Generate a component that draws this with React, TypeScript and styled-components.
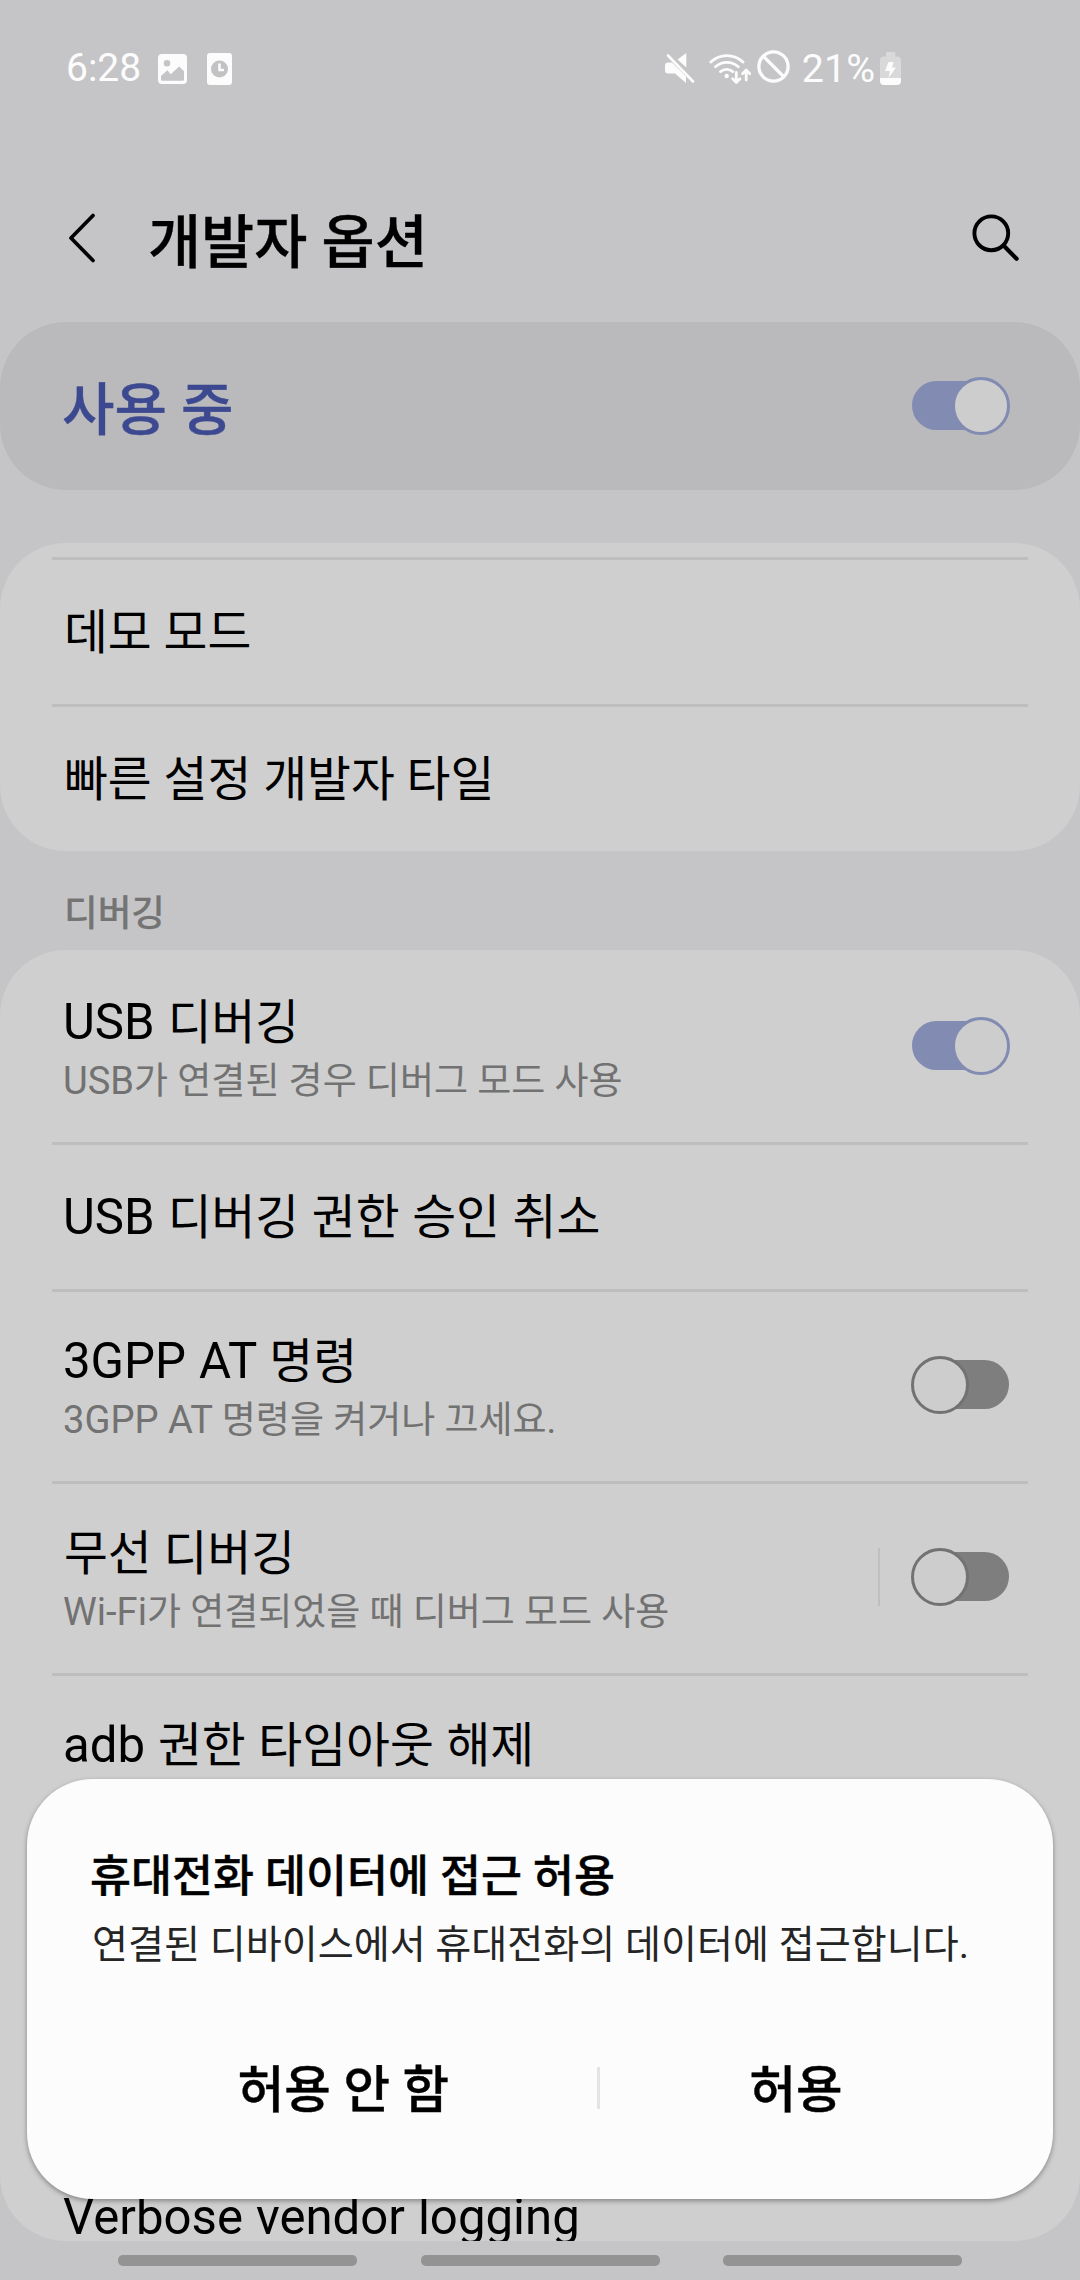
import React from "react";
import styled, { createGlobalStyle } from "styled-components";

const GlobalStyle = createGlobalStyle`
  *, *::before, *::after { box-sizing: border-box; }
  body {
    margin: 0;
    background: #c5c5c7;
    font-family: Roboto, "Noto Sans CJK KR", sans-serif;
  }
`;

const Screen = styled.div`
  position: relative;
  width: 1080px;
  height: 2280px;
  display: flex;
  flex-direction: column;
  background: #c5c5c7;
  color: #000;
  overflow: hidden;
  white-space: nowrap;
`;

const StatusBar = styled.header`
  flex: none;
  height: 136px;
  display: flex;
  justify-content: space-between;
  padding: 45px 179px 0 66px;
  color: #fcfcfc;
`;

const StatusGroup = styled.div`
  display: flex;
  align-items: center;
  height: 47px;
`;

const StatusText = styled.span<{ $size: number }>`
  font-size: ${(p) => p.$size}px;
  line-height: 47px;
`;

const Glyph = styled.svg<{ $ml?: number; $lift?: number }>`
  flex: none;
  display: block;
  margin-left: ${(p) => p.$ml ?? 0}px;
  margin-bottom: ${(p) => p.$lift ?? 0}px;
`;

const AppBar = styled.div`
  flex: none;
  height: 186px;
  display: flex;
  align-items: flex-start;
  padding: 72px 61px 0 66px;
`;

const IconButton = styled.button`
  border: 0;
  padding: 0;
  background: none;
  display: flex;
  margin-top: 5px;
`;

const PageTitle = styled.h1`
  flex: 1;
  margin: 0 0 0 48px;
  font-size: 57.7px;
  line-height: 70px;
  font-weight: 500;
  -webkit-text-stroke: 0.4px currentColor;
`;

const MasterSwitch = styled.section`
  flex: none;
  height: 168px;
  display: flex;
  align-items: center;
  justify-content: space-between;
  padding: 0 70px 0 62px;
  border-radius: 66px;
  background: #bababc;
`;

const MasterLabel = styled.span`
  padding-top: 9px;
  font-size: 57px;
  line-height: 80px;
  font-weight: 500;
  -webkit-text-stroke: 0.4px currentColor;
  color: #3c4990;
`;

const Card = styled.section<{ $top: number; $pad: number; $height: number }>`
  flex: none;
  height: ${(p) => p.$height}px;
  margin-top: ${(p) => p.$top}px;
  padding-top: ${(p) => p.$pad}px;
  border-radius: 66px;
  background: #cfcfcf;
  overflow: hidden;
`;

const Rule = styled.hr`
  height: 3px;
  margin: 0 52px;
  border: 0;
  background: #bebebe;
`;

const Row = styled.div<{ $tall?: boolean }>`
  display: flex;
  align-items: flex-start;
  justify-content: space-between;
  height: ${(p) => (p.$tall ? 189 : 144)}px;
  padding: ${(p) => (p.$tall ? 38 : 41)}px 70px 0 63px;
`;

const RowTitle = styled.div<{ $inset: boolean }>`
  padding-left: ${(p) => (p.$inset ? 1 : 0)}px;
  font-size: 47.7px;
  line-height: 65px;
  word-spacing: ${(p) => (p.$inset ? 0 : 0.8)}px;
`;

const RowSummary = styled.div`
  font-size: 37px;
  line-height: 52px;
  color: #727272;
`;

const Latin = styled.span`
  font-size: 1.03em;
  line-height: 0;
`;

const RowControl = styled.div`
  display: flex;
  align-items: center;
  gap: 31px;
  margin-top: 26px;
`;

const ControlDivider = styled.span`
  width: 2px;
  height: 58px;
  background: #bfbfbf;
`;

const HiddenRows = styled.div`
  height: 277px;
`;

const SectionLabel = styled.h2`
  flex: none;
  height: 99px;
  margin: 0;
  padding: 38px 0 0 64px;
  font-size: 36.6px;
  line-height: 50px;
  font-weight: 500;
  -webkit-text-stroke: 0.2px currentColor;
  color: #747474;
`;

const Track = styled.span<{ $on: boolean }>`
  flex: none;
  display: flex;
  align-items: center;
  justify-content: ${(p) => (p.$on ? "flex-end" : "flex-start")};
  position: relative;
  width: 98px;
  height: 58px;
  margin-right: ${(p) => (p.$on ? 0 : 1)}px;

  &::before {
    content: "";
    position: absolute;
    top: 4px;
    left: ${(p) => (p.$on ? 0 : 8)}px;
    right: ${(p) => (p.$on ? 8 : 0)}px;
    height: 49px;
    border-radius: 25px;
    background: ${(p) => (p.$on ? "#828bb2" : "#7e7e7e")};
  }
`;

const Knob = styled.span<{ $on: boolean }>`
  position: relative;
  width: 58px;
  height: 58px;
  border: 3px solid ${(p) => (p.$on ? "#828bb2" : "#727272")};
  border-radius: 50%;
  background: #cdcdcd;
`;

const NavBar = styled.nav`
  flex: 1;
  display: flex;
  justify-content: space-between;
  padding: 14px 118px 0;
`;

const NavHandle = styled.span`
  width: 239px;
  height: 11px;
  border-radius: 5px;
  background: #939393;
`;

const Dialog = styled.div`
  position: absolute;
  left: 27px;
  right: 27px;
  top: 1779px;
  height: 420px;
  padding: 68px 61px 0 63px;
  border-radius: 66px;
  background: #fcfcfc;
  box-shadow: 0 2px 5px rgba(0, 0, 0, 0.36);
`;

const DialogTitle = styled.h3`
  margin: 0;
  font-size: 44.55px;
  line-height: 60px;
  font-weight: 500;
  -webkit-text-stroke: 0.4px currentColor;
`;

const DialogBody = styled.p`
  margin: 11px 0 0 2px;
  font-size: 39.14px;
  line-height: 54px;
  color: #252525;
`;

const DialogActions = styled.div`
  display: grid;
  grid-template-columns: 507px 3px 392px;
  align-items: center;
  margin-top: 83px;
`;

const DialogButton = styled.button`
  border: 0;
  padding: 6px 0 0;
  background: none;
  font: 500 50.6px/60px Roboto, "Noto Sans CJK KR", sans-serif;
  -webkit-text-stroke: 0.4px currentColor;
  color: #000;
`;

const ActionDivider = styled.span`
  height: 42px;
  background: #e4e4e4;
`;

/* Latin runs are set slightly larger so their caps balance the Hangul. */
function Mixed({ children }: { children: string }) {
  return (
    <>
      {children
        .split(/([A-Za-z0-9][A-Za-z0-9 -]*)/)
        .map((part, i) => (i % 2 ? <Latin key={i}>{part}</Latin> : part))}
    </>
  );
}

function Toggle({ on }: { on: boolean }) {
  return (
    <Track $on={on} role="switch" aria-checked={on}>
      <Knob $on={on} />
    </Track>
  );
}

type OptionProps = { title: string; summary?: string; on?: boolean; divided?: boolean; tall?: boolean };

function Option({ title, summary, on, divided, tall }: OptionProps) {
  return (
    <Row $tall={tall || !!summary}>
      <div>
        <RowTitle $inset={!/^[A-Za-z0-9]/.test(title)}>
          <Mixed>{title}</Mixed>
        </RowTitle>
        {summary && (
          <RowSummary>
            <Mixed>{summary}</Mixed>
          </RowSummary>
        )}
      </div>
      {on !== undefined && (
        <RowControl>
          {divided && <ControlDivider />}
          <Toggle on={on} />
        </RowControl>
      )}
    </Row>
  );
}

export default function App() {
  return (
    <>
      <GlobalStyle />
      <Screen>
        <StatusBar>
          <StatusGroup>
            <StatusText $size={39}>6:28</StatusText>
            <Glyph $ml={17} width="29" height="30" viewBox="0 0 29 30">
              <path
                fillRule="evenodd"
                fill="#fcfcfc"
                d="M4 0h21a4 4 0 0 1 4 4v22a4 4 0 0 1-4 4H4a4 4 0 0 1-4-4V4a4 4 0 0 1 4-4zM9 6a3.300 3.300 0 1 0 0 6.600a3.300 3.300 0 0 0 0-6.600zM3 22v3.500a1.200 1.200 0 0 0 1.200 1.200h20.600a1.200 1.200 0 0 0 1.200-1.200V17.200L21.200 12.500 12.700 20.200 9.400 16.200z"
              />
            </Glyph>
            <Glyph $ml={20} width="25" height="32" viewBox="0 0 25 32">
              <rect width="25" height="32" rx="3" fill="#fcfcfc" />
              <circle cx="12.500" cy="16" r="8.500" fill="#c2c2c4" />
              <path d="M12.500 10.500v6.500h4.500" fill="none" stroke="#fcfcfc" strokeWidth="2.600" />
            </Glyph>
          </StatusGroup>
          <StatusGroup>
            <Glyph width="30" height="31" viewBox="0 0 30 31">
              <path d="M0 12.500a3 3 0 0 1 3-3h4L21 23.500V30L10 20.500H3a3 3 0 0 1-3-3zM21.300 0v14.500L12.500 6.500z" fill="#fcfcfc" />
              <path d="M3 2.500 28 28.500" stroke="#fcfcfc" strokeWidth="2.600" strokeLinecap="round" />
            </Glyph>
            <Glyph $ml={14} width="42" height="35" viewBox="0 0 42 35">
              <g fill="none" stroke="#fcfcfc" strokeWidth="2.800" strokeLinecap="round" strokeLinejoin="round">
                <path d="M1.800 11A23.500 23.500 0 0 1 34 11M6.500 15.800A17 17 0 0 1 29.300 15.800M11.500 20.600A9.500 9.500 0 0 1 23.800 20.600" />
                <path d="M27.300 21.500v9.500M23.700 27.800l3.600 3.600 3.600-3.600M37.200 29V19.500M33.600 22.700l3.600-3.600 3.600 3.600" />
              </g>
              <circle cx="17.700" cy="25" r="2.200" fill="#fcfcfc" />
            </Glyph>
            <Glyph $ml={6} $lift={4} width="33" height="33" viewBox="0 0 33 33">
              <circle cx="16.500" cy="16.500" r="14.600" fill="none" stroke="#fcfcfc" strokeWidth="3.300" />
              <path d="M6 6 27 27" stroke="#fcfcfc" strokeWidth="3.300" />
            </Glyph>
            <Glyph width="12" height="10" />
            <StatusText $size={39.4}>21%</StatusText>
            <Glyph $ml={5} width="21" height="33" viewBox="0 0 21 33">
              <path d="M6 1a1 1 0 0 1 1-1h7.300a1 1 0 0 1 1 1v3.500H17a4 4 0 0 1 4 4V26H0V8.500a4 4 0 0 1 4-4h2z" fill="#d9d9da" />
              <path d="M0 26h21v3a4 4 0 0 1-4 4H4a4 4 0 0 1-4-4zM8.500 10h5l-1.500 5.500h4L8.500 26l1.500-7H5z" fill="#fcfcfc" />
            </Glyph>
          </StatusGroup>
        </StatusBar>

        <AppBar>
          <IconButton aria-label="back">
            <Glyph width="34" height="50" viewBox="0 0 34 50">
              <path d="M27 2.500 5 25 27 47.500" fill="none" stroke="#000" strokeWidth="3.700" strokeLinecap="round" strokeLinejoin="round" />
            </Glyph>
          </IconButton>
          <PageTitle>개발자 옵션</PageTitle>
          <IconButton aria-label="search">
            <Glyph width="50" height="50" viewBox="0 0 50 50">
              <circle cx="22.300" cy="20.300" r="16.900" fill="none" stroke="#000" strokeWidth="3.900" />
              <path d="M34.800 32.700 47.600 45.800" stroke="#000" strokeWidth="4.200" strokeLinecap="round" />
            </Glyph>
          </IconButton>
        </AppBar>

        <MasterSwitch>
          <MasterLabel>사용 중</MasterLabel>
          <Toggle on />
        </MasterSwitch>

        <Card $top={53} $pad={14} $height={308}>
          <Rule />
          <Option title="데모 모드" />
          <Rule />
          <Option title="빠른 설정 개발자 타일" />
        </Card>

        <SectionLabel>디버깅</SectionLabel>

        <Card $top={0} $pad={3} $height={1291}>
          <Option title="USB 디버깅" summary="USB가 연결된 경우 디버그 모드 사용" on />
          <Rule />
          <Option title="USB 디버깅 권한 승인 취소" />
          <Rule />
          <Option title="3GPP AT 명령" summary="3GPP AT 명령을 켜거나 끄세요." on={false} />
          <Rule />
          <Option title="무선 디버깅" summary="Wi-Fi가 연결되었을 때 디버그 모드 사용" on={false} divided />
          <Rule />
          <Option title="adb 권한 타임아웃 해제" tall />
          <Rule />
          <HiddenRows />
          <Rule />
          <Option title="Verbose vendor logging" tall />
        </Card>

        <NavBar>
          <NavHandle />
          <NavHandle />
          <NavHandle />
        </NavBar>

        <Dialog role="dialog">
          <DialogTitle>휴대전화 데이터에 접근 허용</DialogTitle>
          <DialogBody>연결된 디바이스에서 휴대전화의 데이터에 접근합니다.</DialogBody>
          <DialogActions>
            <DialogButton>허용 안 함</DialogButton>
            <ActionDivider />
            <DialogButton>허용</DialogButton>
          </DialogActions>
        </Dialog>
      </Screen>
    </>
  );
}
